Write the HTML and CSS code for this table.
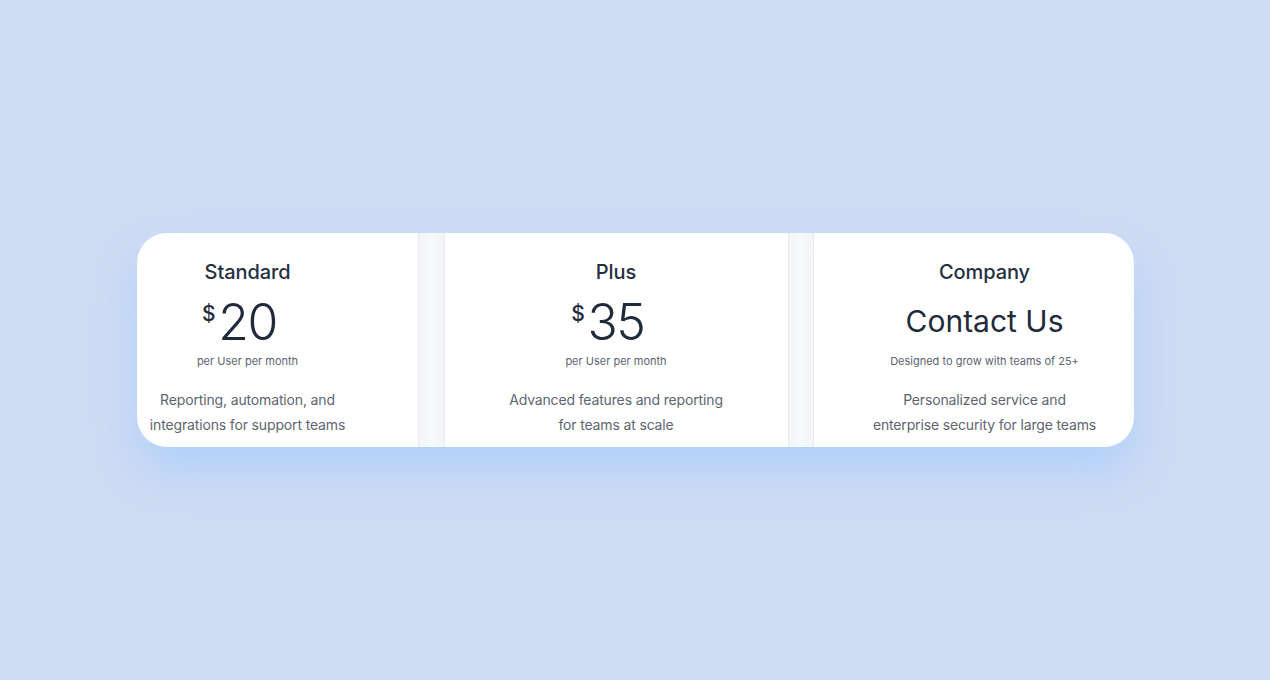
FILE: index.html
```html
<!DOCTYPE html>
<html lang="en">
<head>
<meta charset="utf-8">
<title>Pricing</title>
<link rel="stylesheet" href="styles.css">
</head>
<body>
<main class="page">
  <section class="plans">
    <div class="plan plan-standard">
      <h2 class="plan-name">Standard</h2>
      <div class="price"><span class="currency">$</span><span class="amount">20</span></div>
      <p class="unit">per User per month</p>
      <p class="desc">Reporting, automation, and<br>integrations for support teams</p>
    </div>
    <div class="divider"></div>
    <div class="plan plan-plus">
      <h2 class="plan-name">Plus</h2>
      <div class="price"><span class="currency">$</span><span class="amount">35</span></div>
      <p class="unit">per User per month</p>
      <p class="desc">Advanced features and reporting<br>for teams at scale</p>
    </div>
    <div class="divider"></div>
    <div class="plan plan-company">
      <h2 class="plan-name">Company</h2>
      <div class="price"><span class="contact">Contact Us</span></div>
      <p class="unit">Designed to grow with teams of 25+</p>
      <p class="desc">Personalized service and<br>enterprise security for large teams</p>
    </div>
  </section>
</main>
</body>
</html>
```

FILE: styles.css
```css
* { box-sizing: border-box; }
html, body { margin: 0; padding: 0; }
body {
  background: #d0dcf4;
  font-family: Inter, "Noto Sans", "Liberation Sans", sans-serif;
  color: #1f2a37;
}
.page {
  width: 1270px;
  height: 680px;
  display: flex;
  align-items: center;
  justify-content: center;
}
.plans {
  display: grid;
  grid-template-columns: 281px 27px 343px 26px 320px;
  height: 214px;
  background: #ffffff;
  border-radius: 30px;
  overflow: hidden;
  box-shadow: 0 24px 46px 2px rgba(175, 208, 250, 0.95);
}
.divider {
  background: linear-gradient(90deg, #f3f4f8, #f8f9fb 50%, #f3f4f8);
  border-left: 1px solid #e8eaef;
  border-right: 1px solid #e8eaef;
}
.plan {
  display: flex;
  flex-direction: column;
  align-items: center;
  padding-top: 27px;
  text-align: center;
}
.plan-standard { padding-right: 59px; }
.plan-company { padding-left: 22px; }
.plan-name {
  margin: 0;
  font-size: 20px;
  line-height: 24px;
  font-weight: 500;
  color: #243040;
  letter-spacing: -0.1px;
}
.price {
  display: flex;
  align-items: flex-start;
  height: 56px;
  margin-top: 13px;
  color: #1f2a3a;
}
.currency {
  font-size: 21px;
  line-height: 22px;
  margin-top: 6px;
  margin-left: -17px;
  margin-right: 2px;
  width: 15px;
  font-weight: 500;
}
.amount {
  font-size: 50px;
  line-height: 50px;
  font-weight: 300;
  letter-spacing: -1.5px;
}
.contact {
  font-size: 30px;
  line-height: 40px;
  font-weight: 400;
  margin-top: 4px;
}
.unit {
  margin: 0;
  font-size: 11px;
  line-height: 16px;
  color: #5b6470;
}
.desc {
  margin: 18px 0 0;
  font-size: 14px;
  line-height: 25px;
  letter-spacing: -0.15px;
  color: #5d6570;
}
```
